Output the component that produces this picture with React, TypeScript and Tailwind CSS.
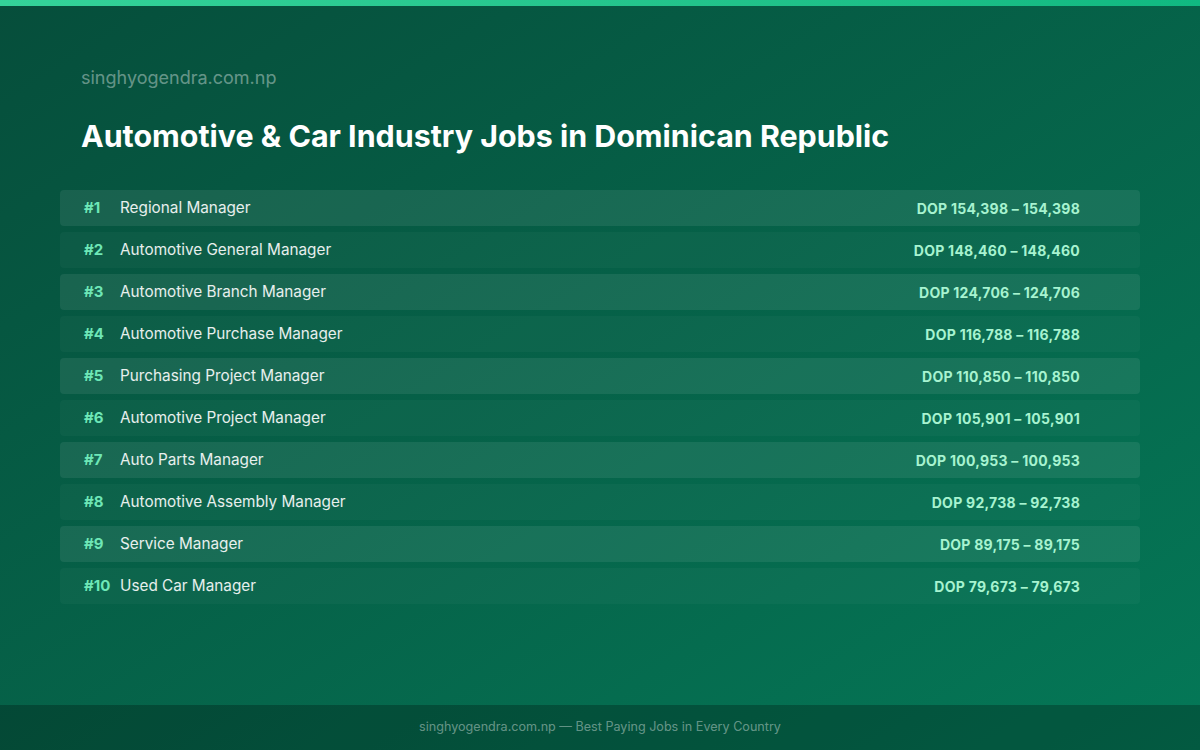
const rows: [string, string][] = [
  ["Regional Manager", "DOP 154,398 – 154,398"],
  ["Automotive General Manager", "DOP 148,460 – 148,460"],
  ["Automotive Branch Manager", "DOP 124,706 – 124,706"],
  ["Automotive Purchase Manager", "DOP 116,788 – 116,788"],
  ["Purchasing Project Manager", "DOP 110,850 – 110,850"],
  ["Automotive Project Manager", "DOP 105,901 – 105,901"],
  ["Auto Parts Manager", "DOP 100,953 – 100,953"],
  ["Automotive Assembly Manager", "DOP 92,738 – 92,738"],
  ["Service Manager", "DOP 89,175 – 89,175"],
  ["Used Car Manager", "DOP 79,673 – 79,673"],
];

export default function App() {
  return (
    <div className="w-[1200px] h-[750px] flex flex-col bg-gradient-to-br from-[#064e3b] to-[#047857] overflow-hidden" style={{ fontFamily: "Inter, 'Noto Sans', sans-serif" }}>
      <div className="h-[6px] bg-gradient-to-r from-[#34d399] to-[#10b981]" />
      <div className="flex-1 flex flex-col px-[60px]">
        <div className="pl-[21px] pt-[60px] text-[18px] leading-[24px] text-white/40">singhyogendra.com.np</div>
        <h1 className="pl-[21px] mt-[26px] text-[30.4px] leading-[40px] font-bold text-white">Automotive &amp; Car Industry Jobs in Dominican Republic</h1>
        <div className="mt-[34px] flex flex-col gap-[6px]">
          {rows.map(([n, s], i) => (
            <div key={i} className={`h-[36px] flex items-center pl-[24px] pr-[60px] rounded-[4px] ${i % 2 === 0 ? "bg-white/[0.08]" : "bg-white/[0.03]"}`}>
              <span className="w-[36px] text-[15px] font-bold text-[#6ee7b7]">#{i + 1}</span>
              <span className="flex-1 text-[15.3px] text-white/90">{n}</span>
              <span className="text-[14px] tracking-[0.25px] font-bold text-[#a7f3d0]">{s}</span>
            </div>
          ))}
        </div>
      </div>
      <div className="h-[45px] flex items-center justify-center bg-black/25 text-[12.6px] text-white/40">singhyogendra.com.np — Best Paying Jobs in Every Country</div>
    </div>
  );
}
